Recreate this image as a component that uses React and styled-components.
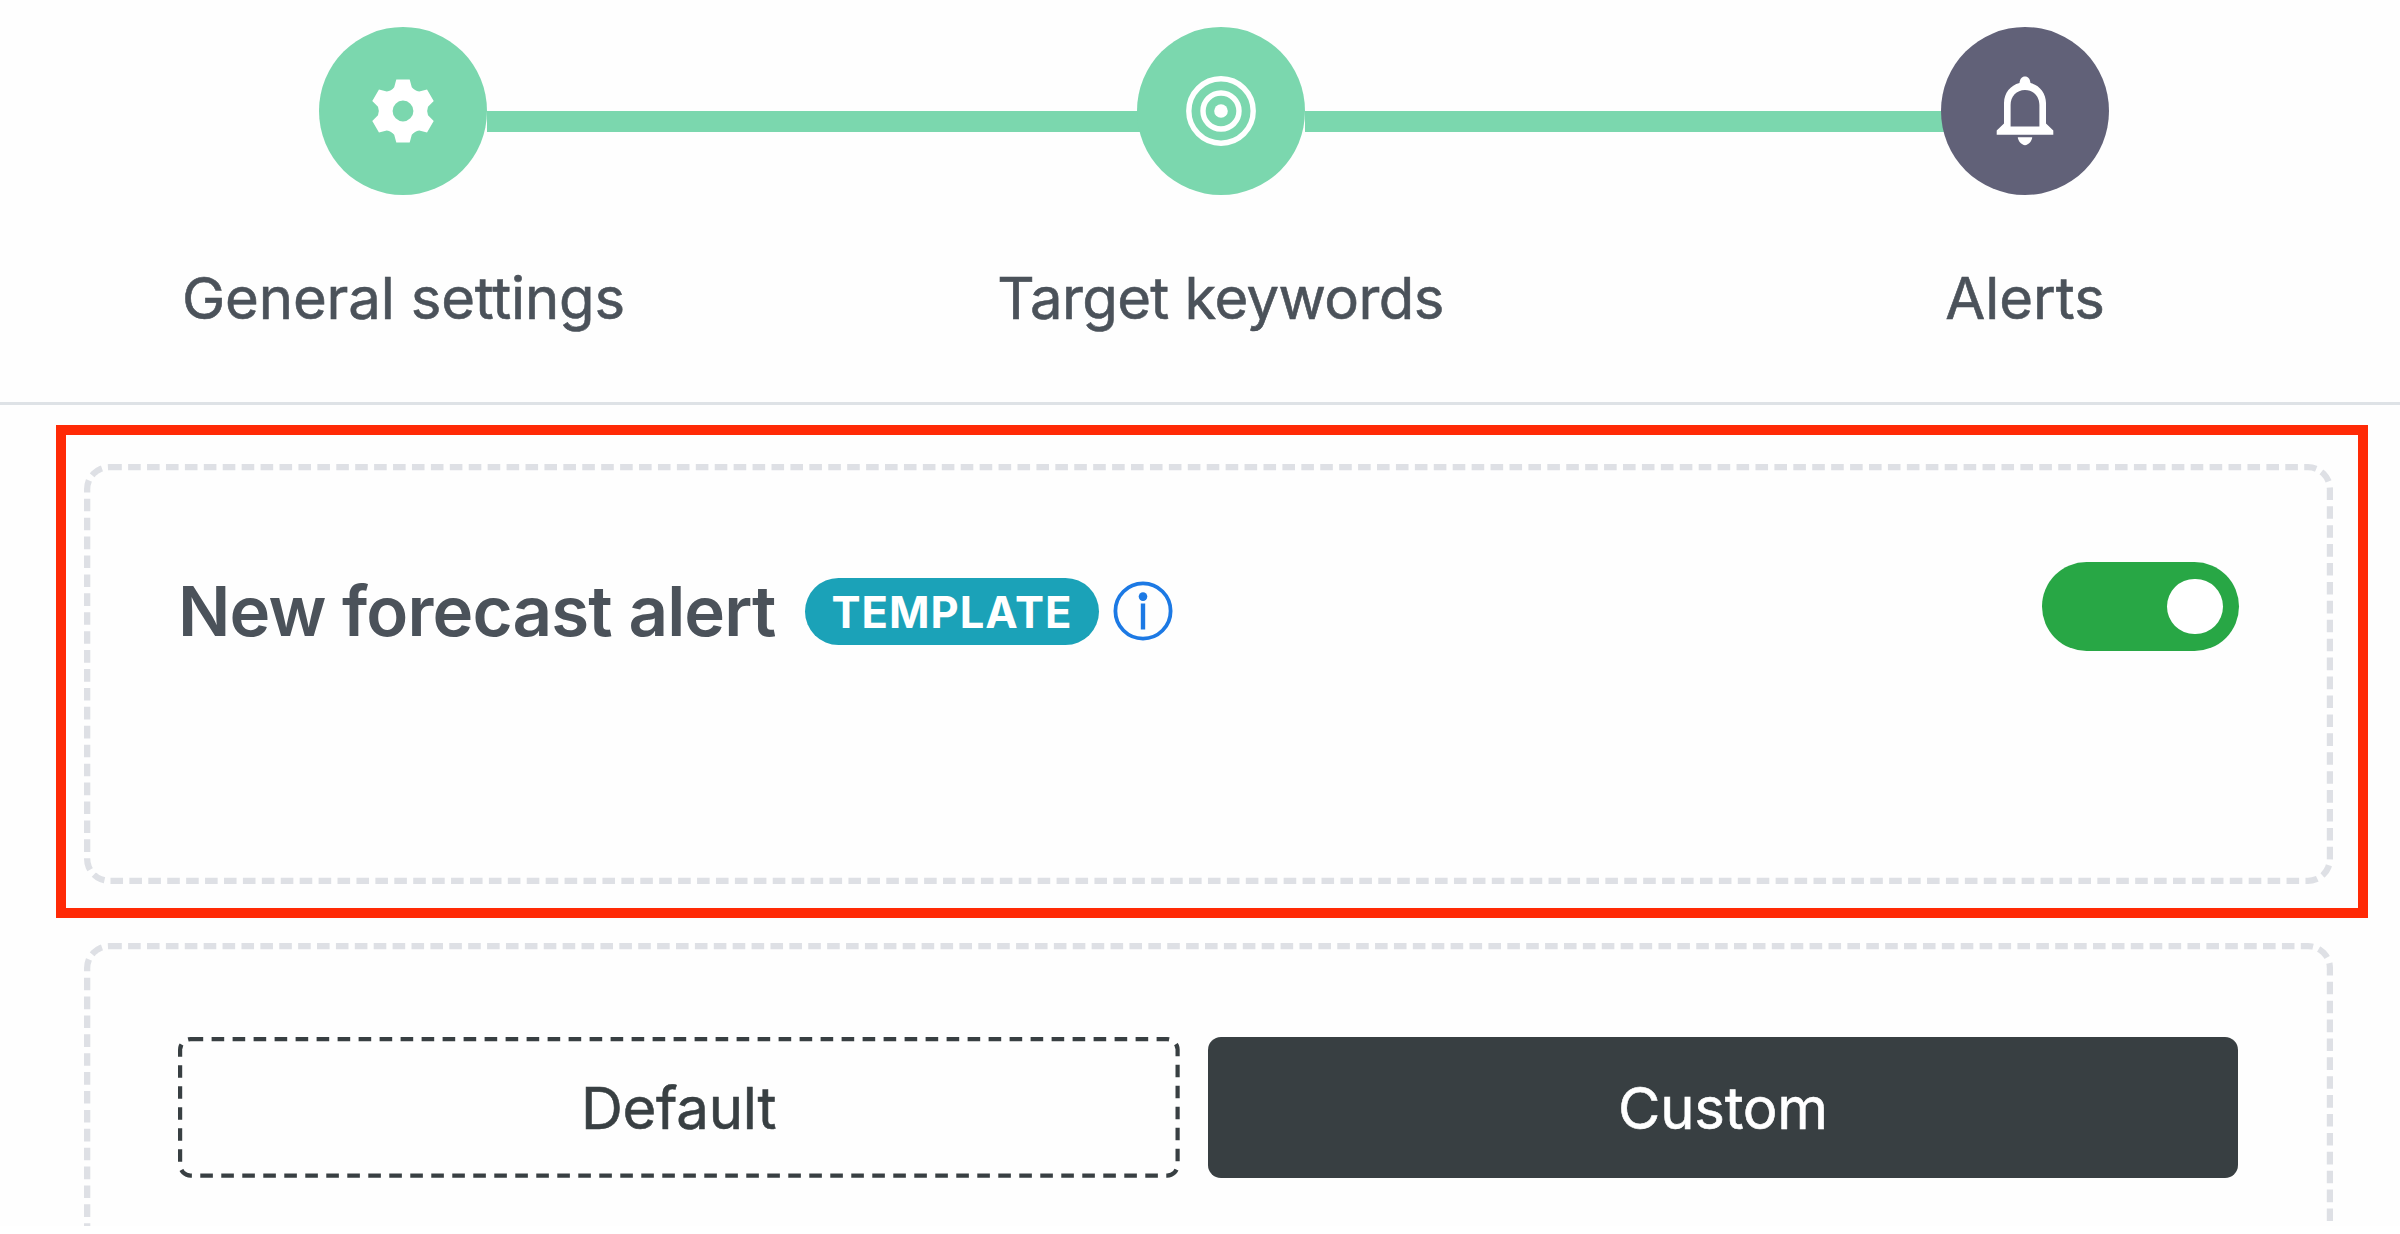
import React from "react";
import styled, { createGlobalStyle, css } from "styled-components";

const GlobalStyle = createGlobalStyle`
  *, *::before, *::after { box-sizing: border-box; }
  html, body { margin: 0; background: #fff; }
  body { overflow: hidden; font-family: Inter, "Liberation Sans", sans-serif; }
`;

/* Dashed outline whose dash rhythm follows a scaled border. */
const dashedOutline = css`
  position: relative;
  &::before {
    content: "";
    position: absolute;
    top: 0;
    left: 0;
    width: calc(100% / 2.1);
    height: calc(100% / 2.1);
    border: ${(p) => p.$line}px dashed ${(p) => p.$stroke};
    border-radius: ${(p) => p.$radius}px;
    transform: scale(2.1);
    transform-origin: 0 0;
    pointer-events: none;
  }
`;

const Page = styled.div`
  width: 2400px;
  height: 1226px;
  overflow: hidden;
  display: flex;
  flex-direction: column;
  background: #fefefe;
`;

const Stepper = styled.header`
  flex: none;
  height: 405px;
  padding-top: 27px;
  border-bottom: 3px solid #dee2e6;
`;

const Track = styled.div`
  display: flex;
  align-items: flex-start;
  padding-left: 319px;
`;

const StepCircle = styled.div`
  flex: none;
  width: 168px;
  height: 168px;
  border-radius: 50%;
  display: flex;
  align-items: center;
  justify-content: center;
  z-index: 1;
  background: ${(p) => (p.$current ? "#616178" : "#7bd7ae")};
  svg { display: block; }
`;

const Connector = styled.div`
  flex: none;
  width: ${(p) => p.$width}px;
  height: 21px;
  margin: 84px -12px 0 0;
  background: #7bd7ae;
`;

const Labels = styled.div`
  display: grid;
  grid-template-columns: 807px 827px 782px;
  margin-top: 61px;
`;

const StepLabel = styled.div`
  font-size: 58px;
  font-weight: 400;
  -webkit-text-stroke: 0.6px currentColor;
  line-height: 84px;
  text-align: center;
  white-space: nowrap;
  letter-spacing: ${(p) => p.$track || 0}px;
  color: #4b525a;
`;

const Body = styled.main`
  flex: none;
  padding: 19.5px 32px 0 56px;
`;

const Highlight = styled.section`
  width: 2312px;
  height: 493.5px;
  border: 10px solid #ff2a06;
  padding: 29.5px 18px 0;
`;

const Card = styled.div`
  ${dashedOutline}
  width: 2249px;
  height: ${(p) => p.$height}px;
  margin: ${(p) => p.$margin || 0};
  padding: 94px 94px 0;
`;

const CardHeader = styled.div`
  display: flex;
  justify-content: space-between;
  align-items: flex-start;
  padding-top: 4px;
`;

const TitleGroup = styled.div`
  display: flex;
  align-items: center;
  height: 98px;
`;

const Title = styled.h2`
  margin: 0;
  width: 627px;
  font-size: 69px;
  line-height: 98px;
  font-weight: 600;
  letter-spacing: -0.85px;
  white-space: nowrap;
  color: #4b525a;
`;

const Badge = styled.span`
  width: 294px;
  height: 67px;
  padding-top: 1px;
  border-radius: 34px;
  display: flex;
  align-items: center;
  justify-content: center;
  background: #1ba2b8;
  color: #fff;
  font-size: 43.5px;
  line-height: 66px;
  font-weight: 700;
  letter-spacing: 1px;
`;

const InfoSvg = styled.svg`
  display: block;
  width: 60px;
  height: 60px;
  margin-left: 14px;
`;

const Toggle = styled.button`
  width: 197px;
  height: 88.5px;
  padding: 0 16.5px;
  border: 0;
  border-radius: 45px;
  display: flex;
  align-items: center;
  justify-content: flex-end;
  background: #28a745;
`;

const Knob = styled.span`
  width: 55.5px;
  height: 55.5px;
  border-radius: 50%;
  background: #fff;
`;

const Choices = styled.div`
  display: flex;
  gap: 29px;
`;

const choice = css`
  height: 141px;
  padding: 1px 0 0;
  border: 0;
  font: 400 58px/140px Inter, "Liberation Sans", sans-serif;
  -webkit-text-stroke: 0.6px currentColor;
  letter-spacing: -0.25px;
  text-align: center;
`;

const OutlineChoice = styled.button`
  ${choice}
  ${dashedOutline}
  width: 1001px;
  background: transparent;
  color: #383f42;
`;

const SolidChoice = styled.button`
  ${choice}
  width: 1030px;
  border-radius: 13px;
  background: #383f42;
  color: #fff;
`;

/* Outline of a six-toothed cog centred on the origin. */
const gearOutline = () => {
  const turn = (x, y, deg) => {
    const a = (deg * Math.PI) / 180;
    const c = Math.cos(a);
    const s = Math.sin(a);
    return `${(x * c - y * s).toFixed(2)} ${(x * s + y * c).toFixed(2)}`;
  };
  let d = "";
  for (let i = 0; i < 6; i += 1) {
    const deg = i * 60;
    d += `${i ? "L" : "M"}${turn(-6.7, -31.6, deg)}L${turn(6.7, -31.6, deg)}`;
    d += `L${turn(8.8, -23.8, deg)}Q${turn(11.6, -20.2, deg)} ${turn(-8.8, -23.8, deg + 60)}`;
  }
  return `${d}Z`;
};

const GearIcon = () => (
  <svg width="66" height="66" viewBox="-33 -33 66 66">
    <path
      fill="#fff"
      fillRule="evenodd"
      d={`${gearOutline()}M-10.4 0A10.4 10.4 0 1 0 10.4 0A10.4 10.4 0 1 0 -10.4 0Z`}
    />
  </svg>
);

const TargetIcon = () => (
  <svg width="72" height="72" viewBox="0 0 72 72" fill="none" stroke="#fff" strokeWidth="5.4">
    <circle cx="36" cy="36" r="32.2" />
    <circle cx="36" cy="36" r="18" />
    <circle cx="36" cy="36" r="6.8" fill="#fff" stroke="none" />
  </svg>
);

const BellIcon = () => (
  <svg width="58" height="70" viewBox="0 0 58 70" fill="#fff">
    <path
      fillRule="evenodd"
      d="M29 .5C32.200 .5 34 2.800 34.500 7C43.500 9.200 50 17 50 27V47.500L57.300 54.500V58.800H.7V54.500L8 47.500V27C8 17 14.500 9.200 23.500 7C24 2.800 25.800 .5 29 .5ZM29 14C20.500 14 14.600 20.500 14.600 29V50.500H43.400V29C43.400 20.500 37.500 14 29 14Z"
    />
    <path d="M21.800 61.300H36.200C36.200 64.500 32.500 69.200 29 69.200S21.800 64.500 21.800 61.300Z" />
  </svg>
);

const InfoIcon = () => (
  <InfoSvg viewBox="0 0 60 60" fill="none" stroke="#1c79e4">
    <circle cx="30" cy="30" r="27.6" strokeWidth="3.8" />
    <path d="M30 22.500V48.500" strokeWidth="4.4" />
    <circle cx="30" cy="15.600" r="4.3" fill="#1c79e4" stroke="none" />
  </InfoSvg>
);

export default function App() {
  return (
    <>
      <GlobalStyle />
      <Page>
        <Stepper>
          <Track>
            <StepCircle><GearIcon /></StepCircle>
            <Connector $width={662} />
            <StepCircle><TargetIcon /></StepCircle>
            <Connector $width={648} />
            <StepCircle $current><BellIcon /></StepCircle>
          </Track>
          <Labels>
            <StepLabel $track={-0.15}>General settings</StepLabel>
            <StepLabel $track={-0.6}>Target keywords</StepLabel>
            <StepLabel>Alerts</StepLabel>
          </Labels>
        </Stepper>
        <Body>
          <Highlight>
            <Card $height={420} $line={3} $stroke="#dee0e5" $radius={12}>
              <CardHeader>
                <TitleGroup>
                  <Title>New forecast alert</Title>
                  <Badge>TEMPLATE</Badge>
                  <InfoIcon />
                </TitleGroup>
                <Toggle aria-label="New forecast alert"><Knob /></Toggle>
              </CardHeader>
            </Card>
          </Highlight>
          <Card $height={700} $line={3} $stroke="#dee0e5" $radius={12} $margin="24.7px 0 0 28px">
            <Choices>
              <OutlineChoice $line={2} $stroke="#383f42" $radius={6}>Default</OutlineChoice>
              <SolidChoice>Custom</SolidChoice>
            </Choices>
          </Card>
        </Body>
      </Page>
    </>
  );
}
